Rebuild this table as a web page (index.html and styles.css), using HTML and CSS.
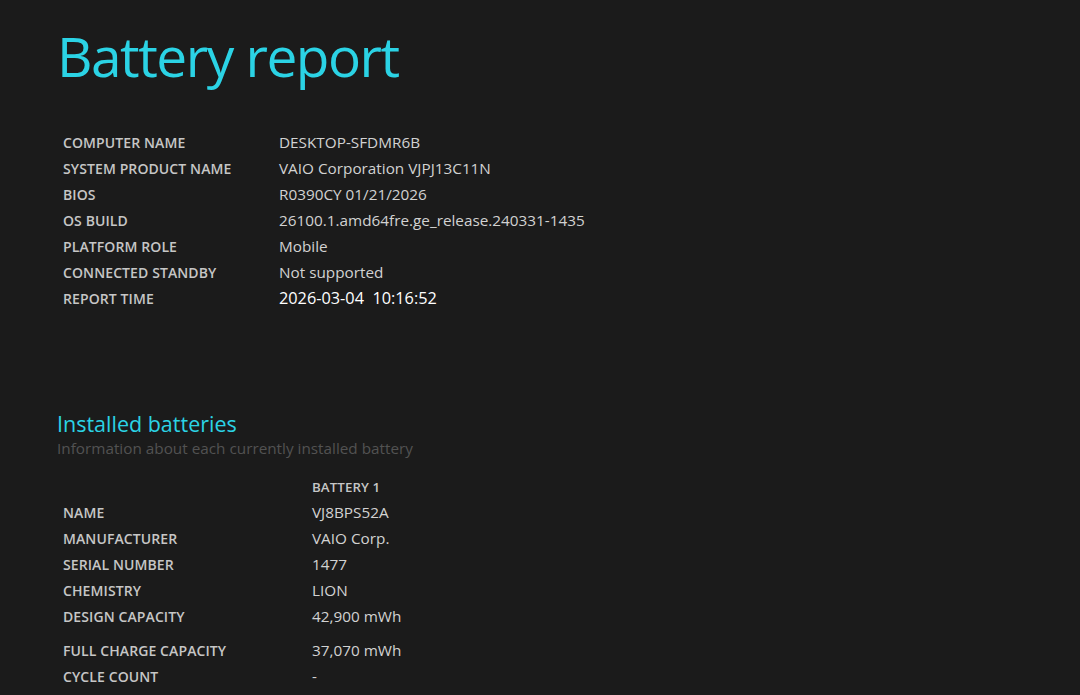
FILE: index.html
```html
<!DOCTYPE html>
<html>
<head>
<meta charset="utf-8">
<link rel="stylesheet" href="styles.css">
</head>
<body>
<main class="page">
  <h1 class="title">Battery report</h1>
  <div class="info">
    <div class="label">COMPUTER NAME</div><div class="value">DESKTOP-SFDMR6B</div>
    <div class="label">SYSTEM PRODUCT NAME</div><div class="value">VAIO Corporation VJPJ13C11N</div>
    <div class="label">BIOS</div><div class="value">R0390CY 01/21/2026</div>
    <div class="label">OS BUILD</div><div class="value">26100.1.amd64fre.ge_release.240331-1435</div>
    <div class="label">PLATFORM ROLE</div><div class="value">Mobile</div>
    <div class="label">CONNECTED STANDBY</div><div class="value">Not supported</div>
    <div class="label">REPORT TIME</div><div class="value strong">2026-03-04&nbsp;&nbsp;10:16:52</div>
  </div>
  <section class="section">
    <h2 class="heading">Installed batteries</h2>
    <div class="sub">Information about each currently installed battery</div>
    <div class="batt">
      <div class="label"></div><div class="label colhead">BATTERY 1</div>
      <div class="label">NAME</div><div class="value">VJ8BPS52A</div>
      <div class="label">MANUFACTURER</div><div class="value">VAIO Corp.</div>
      <div class="label">SERIAL NUMBER</div><div class="value">1477</div>
      <div class="label">CHEMISTRY</div><div class="value">LION</div>
      <div class="label">DESIGN CAPACITY</div><div class="value">42,900 mWh</div>
      <div class="label gap">FULL CHARGE CAPACITY</div><div class="value gap">37,070 mWh</div>
      <div class="label">CYCLE COUNT</div><div class="value">-</div>
    </div>
  </section>
</main>
</body>
</html>
```
FILE: styles.css
```css
html, body {
  margin: 0;
  padding: 0;
  background: #1b1b1b;
  height: 100%;
  overflow: hidden;
}
.page {
  padding: 18px 0 0 57px;
  font-family: "Open Sans", "Noto Sans", sans-serif;
  color: #d4d4d4;
}
.title {
  margin: 0;
  font-weight: 400;
  font-size: 55px;
  line-height: 76px;
  color: #2bd3e5;
  letter-spacing: -1.5px;
}
.info {
  display: grid;
  grid-template-columns: 216px auto;
  grid-auto-rows: 26px;
  align-items: center;
  margin: 35px 0 0 6px;
}
.label {
  font-size: 14px;
  font-weight: 600;
  color: #c6c6c6;
  letter-spacing: 0.1px;
}
.value {
  font-size: 15.3px;
  color: #d2d2d2;
}
.value.strong {
  color: #ffffff;
  font-size: 16.3px;
  font-weight: 500;
}
.section {
  margin-top: 100px;
}
.heading {
  margin: 0;
  font-size: 21.5px;
  font-weight: 500;
  line-height: 26px;
  color: #2bd3e5;
}
.sub {
  font-size: 15.3px;
  line-height: 22px;
  color: #525252;
}
.batt {
  display: grid;
  grid-template-columns: 249px auto;
  grid-template-rows: 24px repeat(5, 26px) 34px 26px;
  align-items: center;
  margin: 16px 0 0 6px;
}
.colhead {
  font-size: 13.3px;
}
.batt .gap {
  padding-top: 8px;
}
```
